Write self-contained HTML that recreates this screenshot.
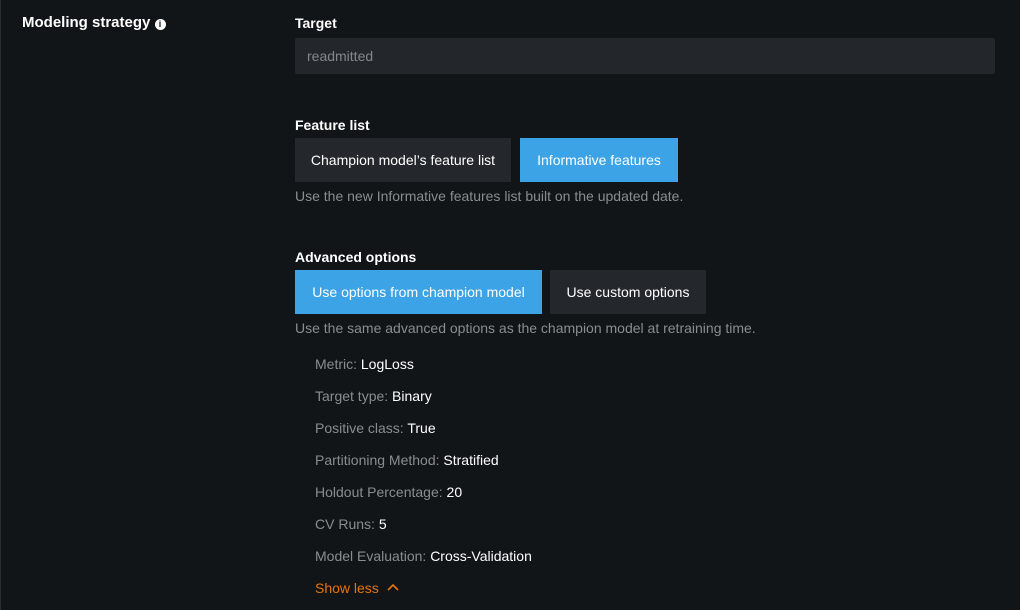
<!DOCTYPE html><html><head><style>
body{margin:0;width:1020px;height:610px;background:#111517;font-family:"Liberation Sans",sans-serif;color:#fff;position:relative;overflow:hidden;box-shadow:inset 1px 0 0 #2a2e31}
.a{position:absolute;white-space:nowrap}
.h{font-size:14px;font-weight:bold}
.btn{position:absolute;height:44px;line-height:44px;font-size:14px;text-align:center;background:#24282c;color:#fff}
.pri{background:#3ba3e6}
.help{font-size:14px;color:#8a8d90}
.kv{font-size:14px;color:#8a8d90;left:315px}
.kv b{font-weight:normal;color:#fff}
</style></head><body>
<div class="a" style="left:22px;top:14px;font-size:15px;font-weight:bold">Modeling strategy <span style="display:inline-block;width:11px;height:11px;border-radius:50%;background:#fff;color:#111517;font-size:9px;line-height:11px;text-align:center;vertical-align:0px">i</span></div>
<div class="a h" style="left:295px;top:15px">Target</div>
<div class="a" style="left:295px;top:38px;width:700px;height:36px;background:#23272b;border-radius:2px;font-size:14px;color:#84878a;line-height:36px;text-indent:12px">readmitted</div>
<div class="a h" style="left:295px;top:117px">Feature list</div>
<div class="btn" style="left:295px;top:138px;width:216px">Champion model’s feature list</div>
<div class="btn pri" style="left:520px;top:138px;width:158px">Informative features</div>
<div class="a help" style="left:295px;top:188px">Use the new Informative features list built on the updated date.</div>
<div class="a h" style="left:295px;top:249px">Advanced options</div>
<div class="btn pri" style="left:295px;top:270px;width:247px">Use options from champion model</div>
<div class="btn" style="left:550px;top:270px;width:156px">Use custom options</div>
<div class="a help" style="left:295px;top:320px">Use the same advanced options as the champion model at retraining time.</div>
<div class="a kv" style="top:356px">Metric: <b>LogLoss</b></div>
<div class="a kv" style="top:388px">Target type: <b>Binary</b></div>
<div class="a kv" style="top:420px">Positive class: <b>True</b></div>
<div class="a kv" style="top:452px">Partitioning Method: <b>Stratified</b></div>
<div class="a kv" style="top:484px">Holdout Percentage: <b>20</b></div>
<div class="a kv" style="top:516px">CV Runs: <b>5</b></div>
<div class="a kv" style="top:548px">Model Evaluation: <b>Cross-Validation</b></div>
<div class="a" style="left:315px;top:580px;font-size:14px;color:#e8730e">Show less <svg width="12" height="8" style="margin-left:4px;vertical-align:2px"><path d="M1 7 L6 2 L11 7" stroke="#e8730e" stroke-width="1.6" fill="none"/></svg></div>
</body></html>
